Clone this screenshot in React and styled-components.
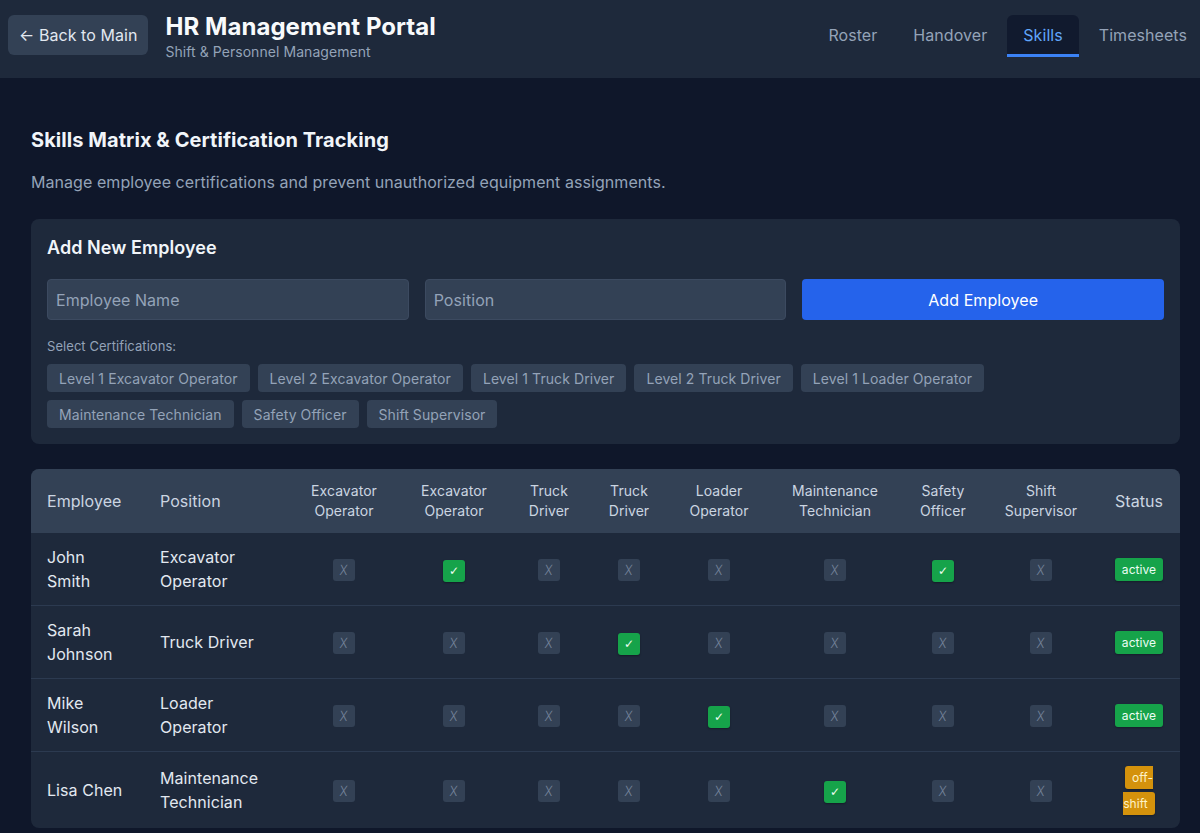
import React from 'react';
import styled, { createGlobalStyle } from 'styled-components';

const GlobalStyle = createGlobalStyle`
  html, body {
    margin: 0;
    padding: 0;
    background: #0f172a;
    font-family: Inter, "Noto Sans", "Liberation Sans", sans-serif;
    letter-spacing: 0.06px;
    color: #e2e8f0;
  }
  * { box-sizing: border-box; }
`;

const Header = styled.header`
  background: #1e293b;
  height: 78px;
  display: flex;
  justify-content: space-between;
  align-items: flex-start;
  padding: 15px 0 0 8px;
`;

const Brand = styled.div`
  display: flex;
  align-items: flex-start;
  gap: 17px;
`;

const BackButton = styled.button`
  height: 40px;
  padding: 0 11px;
  background: #334155;
  color: #e2e8f0;
  border: none;
  border-radius: 6px;
  font-family: inherit;
  font-size: 16px;
  letter-spacing: inherit;
  cursor: pointer;
`;

const TitleBlock = styled.div`
  display: flex;
  flex-direction: column;
  margin-top: -4px;
`;

const Title = styled.h1`
  margin: 0;
  font-size: 24px;
  line-height: 32px;
  font-weight: 700;
  color: #f8fafc;
`;

const Subtitle = styled.span`
  font-size: 14px;
  line-height: 18px;
  color: #94a3b8;
`;

const Nav = styled.nav`
  display: flex;
  gap: 4px;
  margin-right: -3px;
`;

const Tab = styled.button`
  height: 42px;
  padding: 0 16px;
  border: none;
  border-bottom: 3px solid ${p => (p.$active ? '#3b82f6' : 'transparent')};
  border-radius: 6px 6px 0 0;
  background: ${p => (p.$active ? '#111a2e' : 'transparent')};
  color: ${p => (p.$active ? '#60a5fa' : '#94a3b8')};
  font-family: inherit;
  font-size: 16px;
  letter-spacing: inherit;
  cursor: pointer;
`;

const Main = styled.main`
  padding: 48px 20px 8px 31px;
`;

const SectionTitle = styled.h2`
  margin: 0;
  font-size: 20px;
  line-height: 28px;
  font-weight: 700;
  color: #f1f5f9;
`;

const Description = styled.p`
  margin: 16px 0 25px;
  font-size: 16px;
  line-height: 24px;
  color: #94a3b8;
`;

const Card = styled.section`
  background: #1e293b;
  border-radius: 8px;
  padding: 16px;
`;

const CardTitle = styled.h3`
  margin: 0 0 18px;
  font-size: 18px;
  line-height: 26px;
  font-weight: 600;
  color: #f1f5f9;
`;

const FormGrid = styled.div`
  display: grid;
  grid-template-columns: repeat(3, 1fr);
  gap: 16px;
`;

const Input = styled.input`
  height: 41px;
  padding: 0 8px;
  background: #334155;
  border: 1px solid #3c4a60;
  border-radius: 4px;
  color: #e2e8f0;
  font-family: inherit;
  font-size: 16px;
  letter-spacing: inherit;
  &::placeholder { color: #94a3b8; }
`;

const PrimaryButton = styled.button`
  height: 41px;
  background: #2563eb;
  color: #ffffff;
  border: none;
  border-radius: 4px;
  font-family: inherit;
  font-size: 16px;
  font-weight: 400;
  letter-spacing: inherit;
`;

const Label = styled.div`
  margin: 17px 0 9px;
  font-size: 13px;
  line-height: 18px;
  color: #94a3b8;
`;

const ChipList = styled.div`
  display: flex;
  flex-wrap: wrap;
  gap: 8px;
`;

const Chip = styled.button`
  height: 28px;
  padding: 0 12px;
  background: #334155;
  color: #94a3b8;
  border: none;
  border-radius: 4px;
  font-family: inherit;
  font-size: 14px;
  letter-spacing: 0.08px;
`;

const TableWrap = styled.div`
  margin-top: 25px;
  border-radius: 8px;
  overflow: hidden;
  background: #1e293b;
`;

const Table = styled.table`
  width: 1149px;
  table-layout: fixed;
  border-collapse: collapse;
`;

const Th = styled.th`
  height: 64px;
  padding: 0 ${p => (p.$tight ? 8 : 16)}px;
  background: #334155;
  color: #cbd5e1;
  font-weight: 400;
  font-size: ${p => (p.$small ? 14 : 16)}px;
  line-height: 20px;
  text-align: ${p => (p.$left ? 'left' : 'center')};
`;

const Row = styled.tr`
  & + & td { border-top: 1px solid #2c3a50; }
`;

const Td = styled.td`
  padding: 12px ${p => (p.$tight ? 8 : 16)}px;
  height: 72px;
  font-size: 16px;
  line-height: 24px;
  color: #e2e8f0;
  text-align: ${p => (p.$left ? 'left' : 'center')};
  vertical-align: middle;
`;

const Mark = styled.span`
  display: inline-flex;
  align-items: center;
  justify-content: center;
  width: 22px;
  height: 22px;
  border-radius: 3px;
  font-family: "DejaVu Sans", sans-serif;
  font-size: 12px;
  background: ${p => (p.$on ? '#16a34a' : '#334155')};
  color: ${p => (p.$on ? '#f0fdf4' : '#74839a')};
  box-shadow: ${p => (p.$on ? '0 1px 2px rgba(0,0,0,0.35)' : 'none')};
`;

const Cross = styled.span`
  font-family: Inter, sans-serif;
  font-weight: 300;
  font-size: 14px;
  transform: scaleX(0.85) skewX(-6deg);
`;

const Status = styled.span`
  padding: 4px 7px;
  border-radius: 3px;
  font-size: 12px;
  line-height: 24px;
  background: ${p => (p.$kind === 'active' ? '#16a34a' : '#d4920c')};
  color: ${p => (p.$kind === 'active' ? '#ecfdf5' : '#fef3c7')};
  box-shadow: 0 1px 2px rgba(0, 0, 0, 0.3);
`;

const certs = [
  'Level 1 Excavator Operator',
  'Level 2 Excavator Operator',
  'Level 1 Truck Driver',
  'Level 2 Truck Driver',
  'Level 1 Loader Operator',
  'Maintenance Technician',
  'Safety Officer',
  'Shift Supervisor',
];

const columns = [
  { label: 'Excavator Operator', w: 108 },
  { label: 'Excavator Operator', w: 112 },
  { label: 'Truck Driver', w: 78 },
  { label: 'Truck Driver', w: 82 },
  { label: 'Loader Operator', w: 98 },
  { label: 'Maintenance Technician', w: 134 },
  { label: 'Safety Officer', w: 82 },
  { label: 'Shift Supervisor', w: 114 },
];

const employees = [
  { name: 'John Smith', position: 'Excavator Operator', skills: [1, 6], status: 'active' },
  { name: 'Sarah Johnson', position: 'Truck Driver', skills: [3], status: 'active' },
  { name: 'Mike Wilson', position: 'Loader Operator', skills: [4], status: 'active' },
  { name: 'Lisa Chen', position: 'Maintenance Technician', skills: [5], status: 'off-shift' },
];

export default function App() {
  return (
    <>
      <GlobalStyle />
      <Header>
        <Brand>
          <BackButton>← Back to Main</BackButton>
          <TitleBlock>
            <Title>HR Management Portal</Title>
            <Subtitle>Shift &amp; Personnel Management</Subtitle>
          </TitleBlock>
        </Brand>
        <Nav>
          <Tab>Roster</Tab>
          <Tab>Handover</Tab>
          <Tab $active>Skills</Tab>
          <Tab>Timesheets</Tab>
        </Nav>
      </Header>
      <Main>
        <SectionTitle>Skills Matrix &amp; Certification Tracking</SectionTitle>
        <Description>
          Manage employee certifications and prevent unauthorized equipment assignments.
        </Description>
        <Card>
          <CardTitle>Add New Employee</CardTitle>
          <FormGrid>
            <Input placeholder="Employee Name" />
            <Input placeholder="Position" />
            <PrimaryButton>Add Employee</PrimaryButton>
          </FormGrid>
          <Label>Select Certifications:</Label>
          <ChipList>
            {certs.map(c => (
              <Chip key={c}>{c}</Chip>
            ))}
          </ChipList>
        </Card>
        <TableWrap>
          <Table>
            <colgroup>
              <col style={{ width: 113 }} />
              <col style={{ width: 146 }} />
              {columns.map((c, i) => (
                <col key={i} style={{ width: c.w }} />
              ))}
              <col style={{ width: 82 }} />
            </colgroup>
            <thead>
              <tr>
                <Th $left>Employee</Th>
                <Th $left>Position</Th>
                {columns.map((c, i) => (
                  <Th key={i} $small $tight>{c.label}</Th>
                ))}
                <Th>Status</Th>
              </tr>
            </thead>
            <tbody>
              {employees.map(e => (
                <Row key={e.name}>
                  <Td $left>{e.name}</Td>
                  <Td $left>{e.position}</Td>
                  {columns.map((c, i) => {
                    const on = e.skills.includes(i);
                    return (
                      <Td key={i} $tight>
                        <Mark $on={on}>{on ? '✓' : <Cross>X</Cross>}</Mark>
                      </Td>
                    );
                  })}
                  <Td>
                    <Status $kind={e.status}>{e.status}</Status>
                  </Td>
                </Row>
              ))}
            </tbody>
          </Table>
        </TableWrap>
      </Main>
    </>
  );
}
